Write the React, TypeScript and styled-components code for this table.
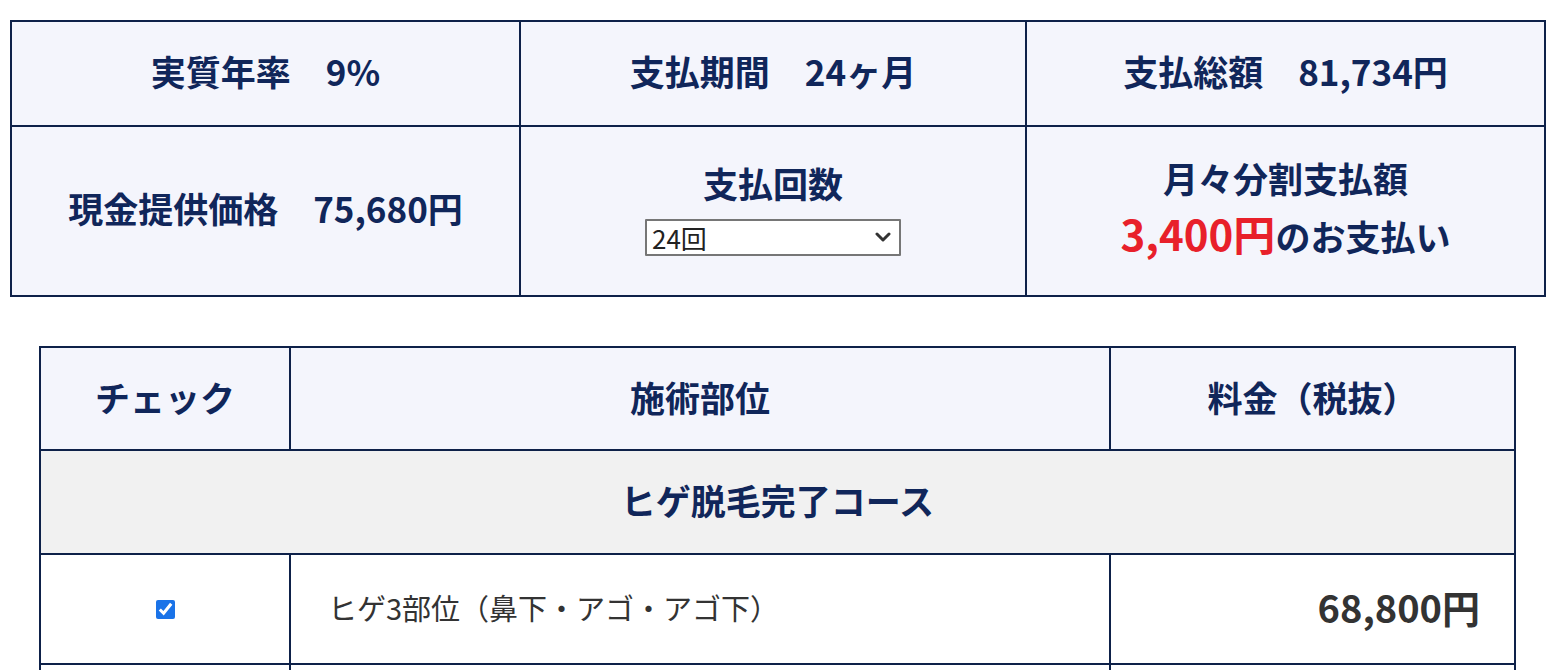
import { createGlobalStyle } from "styled-components";
import styled from "styled-components";

const GlobalStyle = createGlobalStyle`
  html, body {
    margin: 0;
    padding: 0;
    background: #ffffff;
    font-family: "Noto Sans CJK JP", "Noto Sans", sans-serif;
  }
`;

const NAVY = "#10265a";
const LINE = "#0e2149";

const Page = styled.div`
  padding: 20px 0 0 0;
  height: 670px;
  overflow: hidden;
  box-sizing: border-box;
`;

const SummaryTable = styled.table`
  border-collapse: collapse;
  table-layout: fixed;
  width: 1536px;
  margin-left: 10px;
  background: #f4f5fc;
  color: ${NAVY};

  td {
    border: 2px solid ${LINE};
    text-align: center;
    vertical-align: middle;
    padding: 0 0 6px 0;
  }
`;

const SummaryRow = styled.tr<{ $height: number }>`
  height: ${(p) => p.$height}px;
`;

const Heading = styled.div`
  font-size: 35px;
  font-weight: 700;
  line-height: 1.3;
`;

const SelectWrap = styled.div`
  position: relative;
  display: inline-block;
  margin-top: 14px;
`;

const CountSelect = styled.select`
  appearance: none;
  width: 256px;
  height: 37px;
  border: 2px solid #767676;
  border-radius: 1px;
  background: #ffffff;
  color: #222222;
  font-family: "Noto Sans CJK JP", sans-serif;
  font-size: 26px;
  line-height: 1;
  padding: 0 0 0 5px;
  display: block;
`;

const Chevron = styled.svg`
  position: absolute;
  right: 10px;
  top: 13px;
  pointer-events: none;
`;

const PayLine = styled.div`
  font-size: 35px;
  font-weight: 700;
  line-height: 1.3;
  margin-top: 6px;
`;

const Red = styled.span`
  color: #e8202a;
  font-size: 42px;
`;

const PriceTable = styled.table`
  border-collapse: collapse;
  table-layout: fixed;
  width: 1477px;
  margin: 49px 0 0 39px;
  color: ${NAVY};

  th,
  td {
    border: 2px solid ${LINE};
    padding: 0 0 5px 0;
    vertical-align: middle;
  }
`;

const HeadRow = styled.tr`
  height: 103px;
  background: #f4f5fc;

  th {
    font-size: 35px;
    font-weight: 700;
    text-align: center;
  }
`;

const CourseRow = styled.tr`
  height: 104px;
  background: #f1f1f1;

  td {
    font-size: 35px;
    font-weight: 700;
    text-align: center;
  }
`;

const ItemRow = styled.tr`
  height: 110px;
  background: #ffffff;
`;

const CheckCell = styled.td`
  text-align: center;
`;

const Check = styled.input`
  width: 19px;
  height: 19px;
  margin: 0;
  vertical-align: middle;
  accent-color: #1a73e8;
`;

const PartCell = styled.td`
  padding-left: 37px !important;
  font-size: 29px;
  font-weight: 400;
  color: #333333;
  text-align: left;
`;

const PriceCell = styled.td`
  padding-right: 34px !important;
  font-size: 38px;
  font-weight: 700;
  color: #333333;
  text-align: right;
`;

const items = [
  { id: 1, part: "ヒゲ3部位（鼻下・アゴ・アゴ下）", price: "68,800円", checked: true },
];

export default function App() {
  return (
    <>
      <GlobalStyle />
      <Page>
        <SummaryTable>
          <colgroup>
            <col style={{ width: 509 }} />
            <col style={{ width: 506 }} />
            <col />
          </colgroup>
          <tbody>
            <SummaryRow $height={105}>
              <td>
                <Heading>実質年率　9%</Heading>
              </td>
              <td>
                <Heading>支払期間　24ヶ月</Heading>
              </td>
              <td>
                <Heading>支払総額　81,734円</Heading>
              </td>
            </SummaryRow>
            <SummaryRow $height={170}>
              <td>
                <Heading>現金提供価格　75,680円</Heading>
              </td>
              <td>
                <Heading>支払回数</Heading>
                <SelectWrap>
                  <CountSelect defaultValue="24">
                    <option value="6">6回</option>
                    <option value="12">12回</option>
                    <option value="24">24回</option>
                    <option value="36">36回</option>
                  </CountSelect>
                  <Chevron width="16" height="10" viewBox="0 0 16 10">
                    <path d="M2 2 L8 8 L14 2" fill="none" stroke="#333" strokeWidth="3" strokeLinecap="round" strokeLinejoin="round" />
                  </Chevron>
                </SelectWrap>
              </td>
              <td>
                <Heading>月々分割支払額</Heading>
                <PayLine>
                  <Red>3,400円</Red>のお支払い
                </PayLine>
              </td>
            </SummaryRow>
          </tbody>
        </SummaryTable>

        <PriceTable>
          <colgroup>
            <col style={{ width: 250 }} />
            <col style={{ width: 820 }} />
            <col />
          </colgroup>
          <thead>
            <HeadRow>
              <th>チェック</th>
              <th>施術部位</th>
              <th>料金（税抜）</th>
            </HeadRow>
          </thead>
          <tbody>
            <CourseRow>
              <td colSpan={3}>ヒゲ脱毛完了コース</td>
            </CourseRow>
            {items.map((item) => (
              <ItemRow key={item.id}>
                <CheckCell>
                  <Check type="checkbox" defaultChecked={item.checked} />
                </CheckCell>
                <PartCell>{item.part}</PartCell>
                <PriceCell>{item.price}</PriceCell>
              </ItemRow>
            ))}
            <ItemRow>
              <CheckCell />
              <PartCell />
              <PriceCell />
            </ItemRow>
          </tbody>
        </PriceTable>
      </Page>
    </>
  );
}
